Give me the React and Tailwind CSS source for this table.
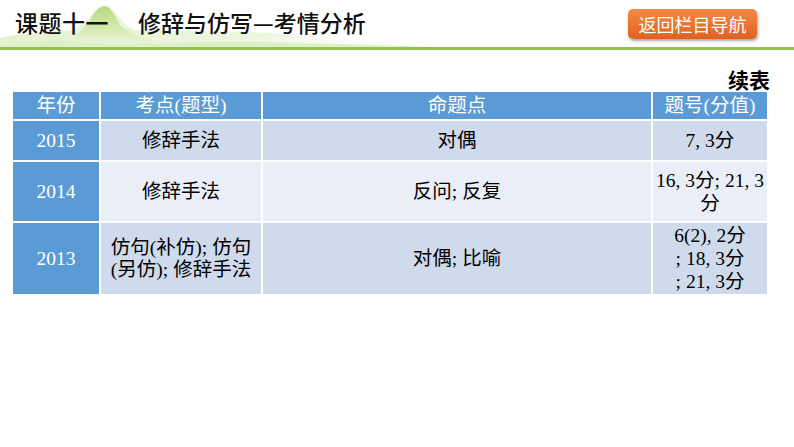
const cellFont = { fontFamily: '"Liberation Serif", "Noto Sans CJK SC", serif' };

const rows = [
  {
    year: '2015',
    point: ['修辞手法'],
    topic: '对偶',
    score: ['7, 3分'],
    bg: 'bg-[#cfdbed]',
    h: 'h-[39px]',
  },
  {
    year: '2014',
    point: ['修辞手法'],
    topic: '反问; 反复',
    score: ['16, 3分; 21, 3', '分'],
    bg: 'bg-[#e9eef7]',
    h: 'h-[59px]',
  },
  {
    year: '2013',
    point: ['仿句(补仿); 仿句', '(另仿); 修辞手法'],
    topic: '对偶; 比喻',
    score: ['6(2), 2分', '; 18, 3分', '; 21, 3分'],
    bg: 'bg-[#cfdbed]',
    h: 'h-[71px]',
  },
];

function Hills() {
  return (
    <svg className="absolute left-0 top-0" width="430" height="47" viewBox="0 0 430 47">
      <defs>
        <linearGradient id="peak" x1="0" y1="0" x2="0" y2="1">
          <stop offset="0" stopColor="#b4da7c" />
          <stop offset="0.6" stopColor="#d6ecb6" />
          <stop offset="1" stopColor="#eef7e3" />
        </linearGradient>
        <linearGradient id="broad" x1="0" y1="0" x2="1" y2="0">
          <stop offset="0" stopColor="#e4f2cf" />
          <stop offset="0.6" stopColor="#edf6e0" />
          <stop offset="1" stopColor="#ffffff" stopOpacity="0" />
        </linearGradient>
      </defs>
      <path d="M0 38 C25 32 50 33 72 30 C84 26 90 16 97 9 C102 5 108 5 113 10 C120 18 124 26 134 30 C170 32 230 30 290 34 C340 38 390 42 430 45 L430 47 L0 47 Z" fill="url(#broad)" />
      <path d="M58 47 C72 40 82 32 90 20 C95 11 100 6 105 6 C110 7 114 14 118 22 C124 32 140 40 190 47 Z" fill="url(#peak)" />
      <path d="M0 47 C30 41 60 40 90 43 C130 46 200 41 260 42 C320 43 380 45 430 47 Z" fill="#dcefc2" opacity="0.9" />
    </svg>
  );
}

export default function App() {
  return (
    <div className="w-[794px] h-[447px] bg-white overflow-hidden" style={{ fontFamily: '"Noto Sans CJK SC", sans-serif' }}>
      <div className="relative h-[47px] flex items-start">
        <Hills />
        <div className="relative flex items-center h-[47px] pl-[15px] pb-[2px] text-[23px] leading-none text-[#111] font-medium">
          <span className="tracking-[0.5px]">课题十一</span>
          <span className="ml-[29px]">修辞与仿写—考情分析</span>
        </div>
        <div className="relative ml-auto mr-[37px] mt-[9px]">
          <div className="w-[129px] h-[30px] rounded-[5px] bg-gradient-to-b from-[#f28a45] to-[#e0611c] shadow-[1px_2px_3px_rgba(0,0,0,0.35)] flex items-center justify-center text-white text-[18px] leading-none">
            返回栏目导航
          </div>
        </div>
      </div>
      <div className="h-[3px] bg-[#8fc35a]" />
      <div className="h-[42px] flex items-end justify-end pr-[24px]">
        <span className="text-[21px] leading-[26px] font-bold text-black">续表</span>
      </div>
      <div className="ml-[13px] grid grid-cols-[86px_160px_388px_114px] gap-[2px] w-[754px] text-[19.5px]" style={cellFont}>
        <div className="h-[27px] bg-[#5b9bd5] text-white flex items-center justify-center leading-none">年份</div>
        <div className="h-[27px] bg-[#5b9bd5] text-white flex items-center justify-center leading-none">考点(题型)</div>
        <div className="h-[27px] bg-[#5b9bd5] text-white flex items-center justify-center leading-none">命题点</div>
        <div className="h-[27px] bg-[#5b9bd5] text-white flex items-center justify-center leading-none">题号(分值)</div>
        {rows.map((r) => (
          <>
            <div key={r.year + 'y'} className={`${r.h} bg-[#5b9bd5] text-white flex items-center justify-center`}>{r.year}</div>
            <div key={r.year + 'p'} className={`${r.h} ${r.bg} text-black flex flex-col items-center justify-center leading-[22px] whitespace-nowrap`}>
              {r.point.map((l) => <span key={l}>{l}</span>)}
            </div>
            <div key={r.year + 't'} className={`${r.h} ${r.bg} text-black flex items-center justify-center`}>{r.topic}</div>
            <div key={r.year + 's'} className={`${r.h} ${r.bg} text-black flex flex-col items-center justify-center leading-[23px] whitespace-nowrap`}>
              {r.score.map((l) => <span key={l}>{l}</span>)}
            </div>
          </>
        ))}
      </div>
    </div>
  );
}
